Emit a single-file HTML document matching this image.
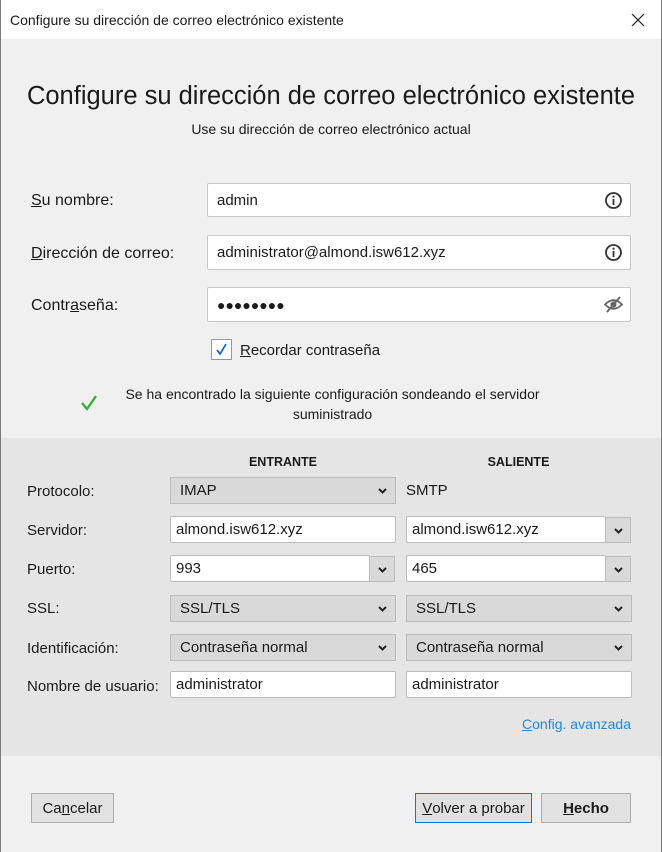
<!DOCTYPE html><html><head><meta charset="utf-8"><style>
*{box-sizing:border-box}body{margin:0;width:662px;height:852px;background:#f0f0f0;font-family:"Liberation Sans",sans-serif;color:#1a1a1a;position:relative;overflow:hidden}
.a{position:absolute;white-space:nowrap}
.tb{position:absolute;left:0;top:0;width:662px;height:39px;background:#fff}
.in{position:absolute;background:#fff;border:1px solid #c8c8c8;border-radius:2px;font-size:15px;padding-left:9px;display:flex;align-items:center}
.s{position:absolute;background:#d9d9d9;border:1px solid #bcbcbc;font-size:15px;padding-left:9px;display:flex;align-items:center}
.t{position:absolute;background:#fff;border:1px solid #bcbcbc;border-radius:2px;font-size:15px;padding-left:5px;display:flex;align-items:center}
.ch{position:absolute;right:8px;top:8px;width:9px;height:9px}
.db{position:absolute;background:#d9d9d9;border:1px solid #bcbcbc;width:26px}
.lbl{position:absolute;left:27px;font-size:15px}
.btn{position:absolute;top:793px;height:30px;background:#e1e1e1;border:1px solid #adadad;font-size:15px;display:flex;align-items:center;justify-content:center}
</style></head><body>
<div class="a" style="left:0;top:0;width:1px;height:852px;background:#7a7a7a;z-index:5"></div>
<div class="a" style="right:0;top:0;width:1px;height:852px;background:#7a7a7a;z-index:5"></div>
<div class="tb"></div>
<div class="a" style="left:10px;top:12px;font-size:14px">Configure su dirección de correo electrónico existente</div>
<svg class="a" style="left:631px;top:13px" width="14" height="14"><path d="M1 1L13 13M13 1L1 13" stroke="#222" stroke-width="1.2"/></svg>
<div class="a" style="left:0;width:662px;text-align:center;top:82px;font-size:25.5px">Configure su dirección de correo electrónico existente</div>
<div class="a" style="left:0;width:662px;text-align:center;top:121px;font-size:14px">Use su dirección de correo electrónico actual</div>

<div class="a" style="left:31px;top:192px;font-size:16px"><u>S</u>u nombre:</div>
<div class="a" style="left:31px;top:245px;font-size:16px"><u>D</u>irección de correo:</div>
<div class="a" style="left:31px;top:297px;font-size:16px">Contr<u>a</u>seña:</div>
<div class="in" style="left:207px;top:183px;width:424px;height:34px">admin</div>
<div class="in" style="left:207px;top:235px;width:424px;height:35px">administrator@almond.isw612.xyz</div>
<div class="in" style="left:207px;top:287px;width:424px;height:35px;font-size:14px;letter-spacing:0px">●●●●●●●●</div>
<svg class="a" style="left:604px;top:191px" width="19" height="19"><circle cx="9.5" cy="9.5" r="7.5" fill="none" stroke="#333" stroke-width="1.8"/><rect x="8.6" y="8" width="1.8" height="6" fill="#333"/><circle cx="9.5" cy="5.6" r="1.1" fill="#333"/></svg>
<svg class="a" style="left:604px;top:243px" width="19" height="19"><circle cx="9.5" cy="9.5" r="7.5" fill="none" stroke="#333" stroke-width="1.8"/><rect x="8.6" y="8" width="1.8" height="6" fill="#333"/><circle cx="9.5" cy="5.6" r="1.1" fill="#333"/></svg>
<svg class="a" style="left:603px;top:295px" width="21" height="19"><path d="M2 9.5Q10.5 1 19 9.5Q10.5 18 2 9.5Z" fill="none" stroke="#666" stroke-width="1.8"/><circle cx="10.5" cy="9.5" r="3" fill="#666"/><path d="M4 17L17 2" stroke="#666" stroke-width="2"/></svg>

<div class="a" style="left:211px;top:339px;width:21px;height:21px;background:#fff;border:1px solid #999"></div>
<svg class="a" style="left:214px;top:342px" width="15" height="15"><path d="M3 8L6 12L12 2" fill="none" stroke="#0a64d6" stroke-width="1.7"/></svg>
<div class="a" style="left:240px;top:342px;font-size:15px"><u>R</u>ecordar contraseña</div>
<svg class="a" style="left:80px;top:393px" width="18" height="18"><path d="M2 10L7 16L16 3" fill="none" stroke="#2fb12f" stroke-width="2.2"/></svg>
<div class="a" style="left:100px;width:465px;text-align:center;top:384px;font-size:14px;line-height:20px;white-space:normal">Se ha encontrado la siguiente configuración sondeando el servidor suministrado</div>

<div class="a" style="left:0;top:438px;width:662px;height:318px;background:#e5e5e5"></div>
<div class="a" style="left:170px;width:226px;text-align:center;top:455px;font-size:12.5px;font-weight:bold">ENTRANTE</div>
<div class="a" style="left:406px;width:225px;text-align:center;top:455px;font-size:12.5px;font-weight:bold">SALIENTE</div>
<div class="lbl" style="top:483px">Protocolo:</div>
<div class="lbl" style="top:522px">Servidor:</div>
<div class="lbl" style="top:561px">Puerto:</div>
<div class="lbl" style="top:600px">SSL:</div>
<div class="lbl" style="top:640px">Identificación:</div>
<div class="lbl" style="top:678px">Nombre de usuario:</div>

<div class="s" style="left:170px;top:477px;width:226px;height:27px">IMAP<svg class="ch" viewBox="0 0 9 9"><path d="M1 3L4.5 6.5L8 3" fill="none" stroke="#222" stroke-width="2"/></svg></div>
<div class="a" style="left:406px;top:482px;font-size:15px">SMTP</div>
<div class="t" style="left:170px;top:516px;width:226px;height:27px">almond.isw612.xyz</div>
<div class="t" style="left:406px;top:516px;width:200px;height:27px">almond.isw612.xyz</div>
<div class="db" style="left:605px;top:517px;height:26px"><svg class="ch" style="right:7px" viewBox="0 0 9 9"><path d="M1 3L4.5 6.5L8 3" fill="none" stroke="#222" stroke-width="2"/></svg></div>
<div class="t" style="left:170px;top:555px;width:200px;height:27px">993</div>
<div class="db" style="left:369px;top:556px;height:26px"><svg class="ch" style="right:7px" viewBox="0 0 9 9"><path d="M1 3L4.5 6.5L8 3" fill="none" stroke="#222" stroke-width="2"/></svg></div>
<div class="t" style="left:406px;top:555px;width:200px;height:27px">465</div>
<div class="db" style="left:605px;top:556px;height:26px"><svg class="ch" style="right:7px" viewBox="0 0 9 9"><path d="M1 3L4.5 6.5L8 3" fill="none" stroke="#222" stroke-width="2"/></svg></div>
<div class="s" style="left:170px;top:595px;width:226px;height:27px">SSL/TLS<svg class="ch" viewBox="0 0 9 9"><path d="M1 3L4.5 6.5L8 3" fill="none" stroke="#222" stroke-width="2"/></svg></div>
<div class="s" style="left:406px;top:595px;width:226px;height:27px">SSL/TLS<svg class="ch" viewBox="0 0 9 9"><path d="M1 3L4.5 6.5L8 3" fill="none" stroke="#222" stroke-width="2"/></svg></div>
<div class="s" style="left:170px;top:634px;width:226px;height:27px">Contraseña normal<svg class="ch" viewBox="0 0 9 9"><path d="M1 3L4.5 6.5L8 3" fill="none" stroke="#222" stroke-width="2"/></svg></div>
<div class="s" style="left:406px;top:634px;width:226px;height:27px">Contraseña normal<svg class="ch" viewBox="0 0 9 9"><path d="M1 3L4.5 6.5L8 3" fill="none" stroke="#222" stroke-width="2"/></svg></div>
<div class="t" style="left:170px;top:671px;width:226px;height:27px">administrator</div>
<div class="t" style="left:406px;top:671px;width:226px;height:27px">administrator</div>
<div class="a" style="right:31px;top:716px;font-size:14px;color:#1e88e5"><u>C</u>onfig. avanzada</div>

<div class="btn" style="left:31px;width:83px">Ca<u>n</u>celar</div>
<div class="btn" style="left:415px;width:117px;border-color:#0078d7"><u>V</u>olver a probar</div>
<div class="btn" style="left:541px;width:90px;font-weight:bold"><u>H</u>echo</div>
</body></html>
